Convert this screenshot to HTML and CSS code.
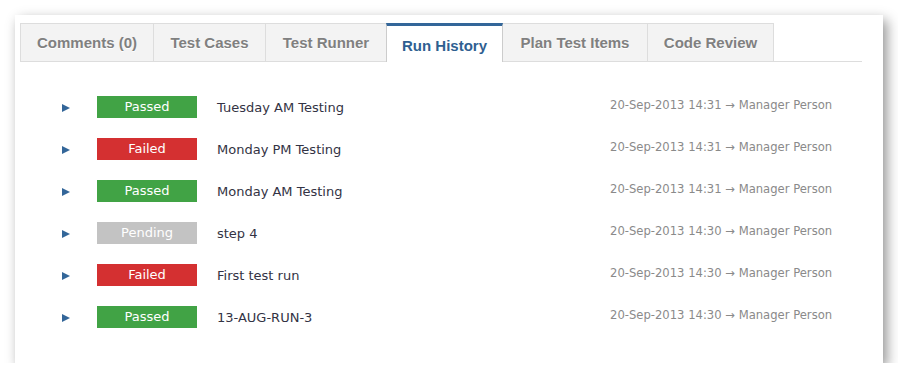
FILE: index.html
```html
<!DOCTYPE html>
<html>
<head>
<meta charset="utf-8">
<link rel="stylesheet" href="styles.css">
</head>
<body>
<div class="panel">
  <div class="tabs">
    <div class="tab t1">Comments (0)</div>
    <div class="tab t2">Test Cases</div>
    <div class="tab t3">Test Runner</div>
    <div class="tab t4 active">Run History</div>
    <div class="tab t5">Plan Test Items</div>
    <div class="tab t6">Code Review</div>
  </div>
  <div class="runs">
    <div class="run"><span class="arrow"></span><span class="badge passed">Passed</span><span class="title">Tuesday AM Testing</span><span class="meta">20-Sep-2013 14:31 → Manager Person</span></div>
    <div class="run"><span class="arrow"></span><span class="badge failed">Failed</span><span class="title">Monday PM Testing</span><span class="meta">20-Sep-2013 14:31 → Manager Person</span></div>
    <div class="run"><span class="arrow"></span><span class="badge passed">Passed</span><span class="title">Monday AM Testing</span><span class="meta">20-Sep-2013 14:31 → Manager Person</span></div>
    <div class="run"><span class="arrow"></span><span class="badge pending">Pending</span><span class="title">step 4</span><span class="meta">20-Sep-2013 14:30 → Manager Person</span></div>
    <div class="run"><span class="arrow"></span><span class="badge failed">Failed</span><span class="title">First test run</span><span class="meta">20-Sep-2013 14:30 → Manager Person</span></div>
    <div class="run"><span class="arrow"></span><span class="badge passed">Passed</span><span class="title">13-AUG-RUN-3</span><span class="meta">20-Sep-2013 14:30 → Manager Person</span></div>
  </div>
</div>
</body>
</html>
```
FILE: styles.css
```css
html, body {
  margin: 0;
  padding: 0;
  background: #ffffff;
}
body {
  padding: 15px 0 0 15px;
  font-family: "DejaVu Sans", Verdana, sans-serif;
}
.panel {
  width: 868px;
  height: 348px;
  box-sizing: border-box;
  background: #fff;
  box-shadow: 4px 5px 12px rgba(0, 0, 0, 0.42);
  padding: 8px 21px 0 5px;
}
.tabs {
  display: flex;
  height: 38px;
  border-bottom: 1px solid #dddddd;
}
.tab {
  box-sizing: border-box;
  height: 38px;
  background: #f3f3f3;
  border: 1px solid #dddddd;
  border-left: none;
  border-bottom: none;
  display: flex;
  align-items: center;
  justify-content: center;
  font-family: "Liberation Sans", Arial, sans-serif;
  font-weight: bold;
  font-size: 15px;
  color: #808080;
  text-shadow: 0 1px 0 #fff;
  padding-bottom: 1px;
}
.tab.t1 { width: 134px; border-left: 1px solid #dddddd; }
.tab.t2 { width: 112px; }
.tab.t3 { width: 121px; }
.tab.t4 { width: 117px; }
.tab.t5 { width: 145px; }
.tab.t6 { width: 126px; }
.tab.active {
  background: #fff;
  border-top: 3px solid #336699;
  color: #2f5f91;
  height: 39px;
  margin-bottom: -1px;
  padding-top: 3px;
  padding-bottom: 0;
  border-right: 1px solid #cccccc;
  border-left: 1px solid #cccccc;
  margin-left: -1px;
}
.tab.t5 { border-left: none; }
.runs {
  padding-top: 24px;
}
.run {
  display: flex;
  align-items: center;
  height: 42px;
  padding-left: 42px;
}
.arrow {
  width: 0;
  height: 0;
  border-top: 4px solid transparent;
  border-bottom: 4px solid transparent;
  border-left: 8px solid #336699;
  margin-right: 27px;
  margin-top: 2px;
}
.badge {
  width: 100px;
  height: 22px;
  line-height: 22px;
  text-align: center;
  color: #fff;
  font-size: 13px;
  margin-right: 20px;
}
.badge.passed { background: #41a345; }
.badge.failed { background: #d43031; }
.badge.pending { background: #c3c3c3; }
.title {
  flex: 1;
  font-size: 13px;
  color: #333344;
}
.meta {
  width: 252px;
  font-size: 11.6px;
  color: #8a8a8a;
  padding-bottom: 4px;
}
```
